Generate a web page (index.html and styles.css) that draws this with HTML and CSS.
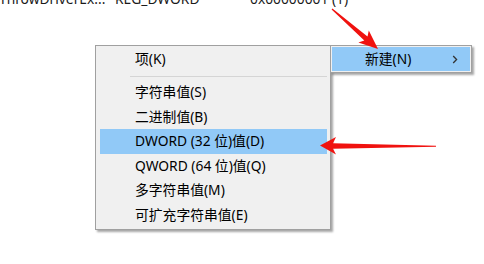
FILE: index.html
```html
<!DOCTYPE html>
<html lang="zh-CN">
<head>
<meta charset="utf-8">
<title>新建</title>
<link rel="stylesheet" href="styles.css">
</head>
<body>
  <div class="list-row">
    <span class="c-name">ThrowDriverEx...</span>
    <span class="c-type">REG_DWORD</span>
    <span class="c-data">0x00000001 (1)</span>
  </div>

  <div class="menu main-menu">
    <div class="item first">项(K)</div>
    <div class="sep"></div>
    <div class="item">字符串值(S)</div>
    <div class="item">二进制值(B)</div>
    <div class="item active">DWORD (32 位)值(D)</div>
    <div class="item">QWORD (64 位)值(Q)</div>
    <div class="item">多字符串值(M)</div>
    <div class="item">可扩充字符串值(E)</div>
  </div>

  <div class="menu sub-menu">
    <div class="item active">
      <span>新建(N)</span>
      <svg class="chev" width="6" height="9" viewBox="0 0 6 9"><polyline points="1.2,1 4.6,4.5 1.2,8" fill="none" stroke="#333" stroke-width="1.3"/></svg>
    </div>
  </div>

  <svg class="arrows" width="484" height="264" viewBox="0 0 484 264">
    <polygon fill="#f0120f" points="332.4,8.6 367.5,36.6 368.8,30.5 378,49 358.4,42.5 364.3,40.4 331.6,9.4"/>
    <polygon fill="#f0120f" points="320,145.5 336,137 333,143.2 436,145.8 436,146.8 333,148.8 336,154.5"/>
  </svg>
</body>
</html>
```
FILE: styles.css
```css
html, body {
  margin: 0;
  padding: 0;
}
body {
  position: relative;
  width: 484px;
  height: 264px;
  overflow: hidden;
  background: #ffffff;
  font-family: "Noto Sans", "Noto Sans CJK SC", sans-serif;
  font-size: 13.8px;
  color: #000;
}
.list-row {
  display: flex;
  margin-top: -9px;
  margin-left: -1px;
  line-height: 16px;
  color: #1a1a1a;
  white-space: nowrap;
}
.c-name { width: 116px; }
.c-type { width: 135px; }

.menu {
  position: absolute;
  box-sizing: border-box;
  background: #f0f0f0;
  border: 1px solid #a0a0a0;
  box-shadow: 2px 2px 2px rgba(0, 0, 0, 0.35);
}
.main-menu {
  left: 95px;
  top: 45px;
  width: 236px;
  padding: 1px 3px 2px 4px;
}
.item {
  height: 24.5px;
  line-height: 24.5px;
  padding-left: 35px;
  white-space: nowrap;
}
.item.first {
  height: 24px;
  line-height: 24px;
}
.sep {
  height: 1px;
  background: #d5d5d5;
  margin: 5px 0 3px 30px;
}
.active {
  background: #91c9f7;
}
.sub-menu {
  left: 330px;
  top: 45px;
  width: 142px;
  padding: 1px;
  z-index: 2;
}
.sub-menu .item {
  height: 24px;
  display: flex;
  align-items: center;
  justify-content: space-between;
  padding-left: 33px;
  padding-right: 12px;
}
.chev { display: block; }
.arrows {
  position: absolute;
  left: 0;
  top: 0;
  z-index: 5;
  pointer-events: none;
}
```
